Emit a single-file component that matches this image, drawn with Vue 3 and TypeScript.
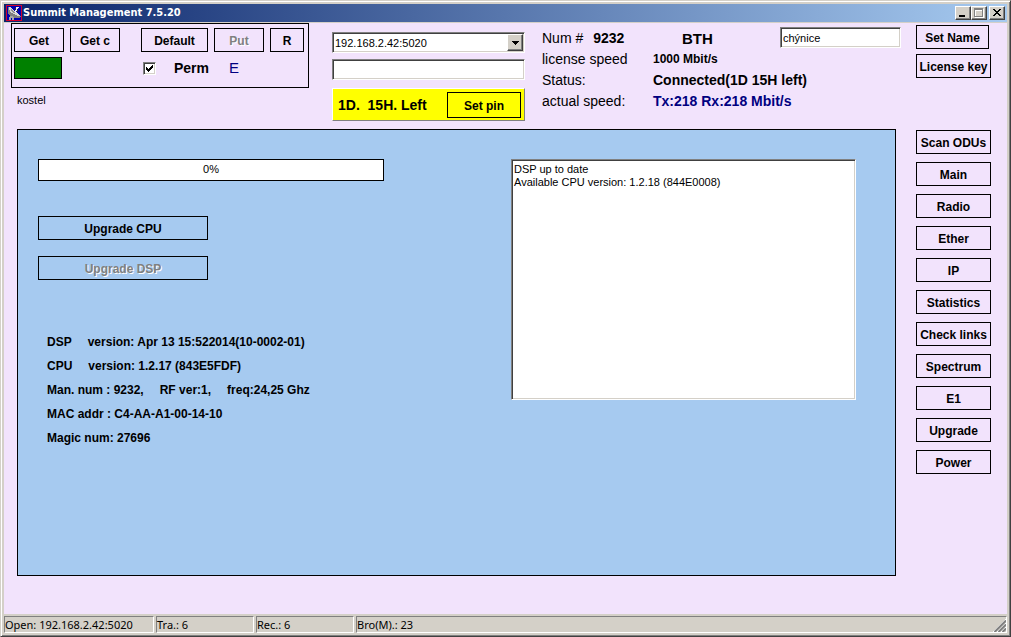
<script setup lang="ts">
import { ref } from 'vue'

const address = ref('192.168.2.42:5020')
const command = ref('')
const siteName = ref('chýnice')
const permanent = ref(true)
const progress = ref(0)
const log = ref('DSP up to date\nAvailable CPU version: 1.2.18 (844E0008)')

const pages: string[] = [
  'Scan ODUs', 'Main', 'Radio', 'Ether', 'IP', 'Statistics',
  'Check links', 'Spectrum', 'E1', 'Upgrade', 'Power',
]

const details: string[][] = [
  ['DSP', 'version: Apr 13 15:522014(10-0002-01)'],
  ['CPU', 'version: 1.2.17 (843E5FDF)'],
  ['Man. num : 9232,', 'RF ver:1,', 'freq:24,25 Ghz'],
  ['MAC addr : C4-AA-A1-00-14-10'],
  ['Magic num: 27696'],
]

const statusPanels: string[] = ['Open: 192.168.2.42:5020', 'Tra.: 6', 'Rec.: 6', 'Bro(M).: 23']
</script>

<template>
  <div class="window">
    <header class="titlebar">
      <svg class="app-icon" viewBox="0 0 16 16" shape-rendering="crispEdges" aria-hidden="true">
        <rect width="16" height="16" fill="#d00030" />
        <rect x="1" y="1" width="14" height="14" fill="#0000b0" />
        <path d="M2 2h2v1h1v1h1v1h1v1h1v1h2v1h2v1h1v1h1v1h1v1h-1v1H7v-1H5v-1H4v-1H3V9H2z" fill="#808080" />
        <path d="M3 2h2v1h1v1h1v1h1v1h2v1h1v1h1v1h1v1h1v1h-3v-1H9V9H7V8H5V7H4V5H3z" fill="#d8d8d8" />
        <path d="M5 4h1v1h1v1h1v1h1v1H7V7H6V6H5z" fill="#909090" />
        <path d="M10 2h3v1h-1v1h-1v2h-1v2H9V5h1z" fill="#f0f0f0" />
        <path d="M9 3h1v2H9zM11 5h1v2h-1z" fill="#303030" />
        <path d="M4 11h3v1h1v3H6v-2H5v2H3v-3h1z" fill="#a8a8a8" />
      </svg>
      <h1>Summit Management 7.5.20</h1>
      <div class="caption-buttons">
        <button type="button" class="caption" aria-label="Minimize">
          <svg viewBox="0 0 12 10" shape-rendering="crispEdges"><path d="M2 7h6v2H2z" fill="#000" /></svg>
        </button>
        <button type="button" class="caption" aria-label="Maximize" disabled>
          <svg viewBox="0 0 12 10" shape-rendering="crispEdges">
            <path d="M2 1h9v9H2zM3 3v6h7V3z" fill="#fff" fill-rule="evenodd" />
            <path d="M1 0h9v9H1zM2 2v6h7V2z" fill="#808080" fill-rule="evenodd" />
          </svg>
        </button>
        <button type="button" class="caption close" aria-label="Close">
          <svg viewBox="0 0 12 10" shape-rendering="crispEdges">
            <path d="M2 1h2v1h1v1h2V2h1V1h2v1H9v1H8v1H7v1h1v1h1v1h1v1H8V7H7V6H5v1H4v1H2V7h1V6h1V5h1V4H4V3H3V2H2z" fill="#000" />
          </svg>
        </button>
      </div>
    </header>

    <main class="client">
      <section class="top">
        <div class="actions">
          <div class="group">
            <div class="row">
              <button type="button" class="btn w50">Get</button>
              <button type="button" class="btn w50">Get c</button>
              <button type="button" class="btn default">Default</button>
              <button type="button" class="btn w50" disabled>Put</button>
              <button type="button" class="btn reset">R</button>
            </div>
            <div class="row second">
              <span class="lamp"></span>
              <label class="perm"><input v-model="permanent" type="checkbox" />Perm</label>
              <span class="flag">E</span>
            </div>
          </div>
          <span class="site">kostel</span>
        </div>

        <div class="connect">
          <div class="combo">
            <select v-model="address" aria-label="Address">
              <option>192.168.2.42:5020</option>
            </select>
            <span class="arrow"><svg viewBox="0 0 7 4" shape-rendering="crispEdges"><path d="M0 0h7v1H6v1H5v1H4v1H3V3H2V2H1V1H0z" /></svg></span>
          </div>
          <input v-model="command" class="field" type="text" aria-label="Command" />
          <div class="lease">
            <span>1D.&nbsp; 15H. Left</span>
            <button type="button" class="btn pin">Set pin</button>
          </div>
        </div>

        <dl class="status">
          <dt>Num # <b>9232</b></dt>
          <dd class="mode">BTH</dd>
          <dt>license speed</dt>
          <dd class="small">1000 Mbit/s</dd>
          <dt>Status:</dt>
          <dd>Connected(1D 15H left)</dd>
          <dt>actual speed:</dt>
          <dd class="rate">Tx:218 Rx:218 Mbit/s</dd>
        </dl>

        <input v-model="siteName" class="field name" type="text" aria-label="Name" />
        <div class="side-top">
          <button type="button" class="btn">Set Name</button>
          <button type="button" class="btn">License key</button>
        </div>
      </section>

      <section class="body">
        <div class="panel">
          <div class="upgrade">
            <div class="progress" role="progressbar" :aria-valuenow="progress" aria-label="Upgrade progress">{{ progress }}%</div>
            <button type="button" class="btn wide">Upgrade CPU</button>
            <button type="button" class="btn wide" disabled>Upgrade DSP</button>
            <ul class="details">
              <li v-for="(line, i) in details" :key="i">
                <span v-for="part in line" :key="part">{{ part }}</span>
              </li>
            </ul>
          </div>
          <textarea v-model="log" class="log" aria-label="Log" spellcheck="false"></textarea>
        </div>
        <nav class="pages">
          <button v-for="page in pages" :key="page" type="button" class="btn">{{ page }}</button>
        </nav>
      </section>
    </main>

    <footer class="statusbar">
      <span v-for="text in statusPanels" :key="text">{{ text }}</span>
      <svg class="grip" viewBox="0 0 13 13" aria-hidden="true">
        <path d="M0 13L13 0M4 13l9-9M8 13l5-5" stroke="#fff" />
        <path d="M1.5 13L13 1.500M5.500 13L13 5.500M9.500 13L13 9.500" stroke="#808080" stroke-width="2" />
      </svg>
    </footer>
  </div>
</template>

<style>
body {
  margin: 0;
  background: #d4d0c8;
}
</style>

<style scoped>
* {
  box-sizing: border-box;
}

.window {
  display: flex;
  flex-direction: column;
  min-height: 100vh;
  padding: 3px;
  border: 1px solid;
  border-color: #d4d0c8 #404040 #404040 #d4d0c8;
  box-shadow: inset 1px 1px #fff, inset -1px -1px #808080;
  background: #d4d0c8;
  color: #000;
  font: 12px/14px "Liberation Sans", Arial, sans-serif;
}

.titlebar {
  display: flex;
  align-items: center;
  height: 18px;
  margin-bottom: 1px;
  padding: 0 2px;
  background: linear-gradient(90deg, #0a246a, #a6caf0);
}

.app-icon {
  flex: none;
  width: 16px;
  height: 16px;
}

h1 {
  flex: 1;
  margin: 0 0 0 1px;
  color: #fff;
  font: bold 11px/18px "DejaVu Sans Condensed", Tahoma, "Noto Sans", sans-serif;
}

.caption-buttons {
  display: flex;
}

.caption {
  width: 16px;
  height: 14px;
  padding: 1px;
  border: 1px solid;
  border-color: #fff #404040 #404040 #fff;
  box-shadow: inset -1px -1px #808080;
  background: #d4d0c8;
}

.caption svg {
  display: block;
  width: 12px;
  height: 10px;
}

.close {
  margin-left: 2px;
}

.client {
  flex: 1;
  padding-right: 16px;
  background: #f2e3fc;
}

.top {
  display: flex;
  min-height: 106px;
  padding-left: 7px;
}

.btn {
  height: 24px;
  padding: 2px 0 0;
  border: 1px solid #000;
  border-radius: 0;
  background: transparent;
  color: #000;
  font: bold 12px/14px "Liberation Sans", Arial, sans-serif;
  white-space: nowrap;
}

.btn:disabled {
  color: #808080;
  text-shadow: 1px 1px #fff;
}

.actions {
  flex: none;
  width: 298px;
}

.group {
  height: 65px;
  padding: 4px 2px;
  border: 1px solid #000;
}

.row {
  display: flex;
  gap: 6px;
}

.w50 {
  width: 50px;
}

.default {
  width: 67px;
  margin-left: 15px;
}

.reset {
  width: 34px;
}

.second {
  align-items: center;
  gap: 0;
  margin-top: 5px;
}

.lamp {
  width: 48px;
  height: 22px;
  border: 1px solid #000;
  background: #008000;
}

.perm {
  display: flex;
  align-items: center;
  width: 86px;
  margin-left: 81px;
  font-size: 14px;
  font-weight: bold;
}

.perm input {
  appearance: none;
  width: 13px;
  height: 13px;
  margin: 0 18px 0 0;
  border: 1px solid;
  border-color: #808080 #fff #fff #808080;
  box-shadow: inset 1px 1px #404040, inset -1px -1px #d4d0c8;
  background: #fff;
}

.perm input:checked {
  background: #fff url("data:image/svg+xml,%3Csvg xmlns='http://www.w3.org/2000/svg' viewBox='0 0 7 7' shape-rendering='crispEdges'%3E%3Cpath d='M0 2h1v1h1v1h1V3h1V2h1V1h1V0h1v3H6v1H5v1H4v1H3v1H2V6H1V5H0z'/%3E%3C/svg%3E") center / 7px 7px no-repeat;
}

.flag {
  color: #000080;
  font-size: 15px;
}

.site {
  display: block;
  margin: 5px 6px;
  font-size: 11px;
}

.connect {
  flex: none;
  width: 193px;
  margin: 9px 0 0 23px;
}

.field,
.combo {
  display: block;
  width: 100%;
  height: 21px;
  padding: 0 2px;
  border: 1px solid;
  border-color: #808080 #fff #fff #808080;
  border-radius: 0;
  box-shadow: inset 1px 1px #404040, inset -1px -1px #d4d0c8;
  background: #fff;
  color: #000;
  font: 12px/14px "Liberation Sans", Arial, sans-serif;
  outline: none;
}

.combo {
  display: flex;
  margin-bottom: 6px;
  padding: 1px;
  font-size: 11px;
}

.combo select {
  flex: 1;
  appearance: none;
  padding: 0 1px;
  border: 0;
  background: transparent;
  color: #000;
  font: inherit;
}

.arrow {
  display: grid;
  place-items: center;
  width: 16px;
  border: 1px solid;
  border-color: #fff #404040 #404040 #fff;
  box-shadow: inset -1px -1px #808080;
  background: #d4d0c8;
  pointer-events: none;
}

.arrow svg {
  width: 7px;
  height: 4px;
}

.lease {
  display: flex;
  align-items: center;
  justify-content: space-between;
  height: 33px;
  margin-top: 8px;
  padding: 0 3px 0 5px;
  border: 1px solid;
  border-color: #fff #808080 #808080 #fff;
  background: #ff0;
  font-size: 14px;
  font-weight: bold;
}

.pin {
  width: 74px;
  height: 26px;
}

.status {
  display: grid;
  flex: 1;
  grid-template-columns: 111px 1fr;
  grid-auto-rows: 21px;
  min-width: 0;
  margin: 5px 0 0 17px;
  font-size: 14px;
  line-height: 21px;
  white-space: nowrap;
}

.status dt b {
  margin-left: 6px;
}

.status dd {
  margin: 0;
  font-weight: bold;
}

.status .mode {
  padding-left: 29px;
  font-size: 15px;
}

.status .small {
  font-size: 12px;
}

.status .rate {
  color: #000080;
}

.name {
  flex: none;
  width: 121px;
  margin-top: 4px;
  font-size: 11px;
}

.side-top {
  display: flex;
  flex: none;
  flex-direction: column;
  gap: 5px;
  width: 75px;
  margin: 2px 0 0 15px;
}

.side-top .btn:first-child {
  margin-right: 2px;
}

.body {
  display: flex;
  gap: 20px;
  padding-left: 13px;
}

.panel {
  display: flex;
  flex: 1;
  justify-content: space-between;
  min-height: 447px;
  padding: 29px 39px 20px 20px;
  border: 1px solid #000;
  background: #a6caf0;
}

.upgrade {
  display: flex;
  flex-direction: column;
  align-items: flex-start;
  width: 346px;
}

.progress {
  width: 100%;
  height: 22px;
  margin-bottom: 35px;
  border: 1px solid #000;
  background: #fff;
  font-size: 11px;
  line-height: 19px;
  text-align: center;
}

.wide {
  width: 170px;
  margin-bottom: 16px;
}

.details {
  margin: 34px 0 0;
  padding: 0 0 0 9px;
  list-style: none;
  font-weight: bold;
  line-height: 24px;
}

.details li {
  display: flex;
  gap: 16px;
  white-space: nowrap;
}

.log {
  width: 345px;
  height: 241px;
  padding: 3px 2px;
  border: 1px solid;
  border-color: #808080 #fff #fff #808080;
  border-radius: 0;
  box-shadow: inset 1px 1px #404040, inset -1px -1px #d4d0c8;
  background: #fff;
  color: #000;
  font: 11px/13px "Liberation Sans", Arial, sans-serif;
  outline: none;
  resize: none;
}

.pages {
  display: flex;
  flex-direction: column;
  gap: 8px;
  width: 75px;
  padding-top: 1px;
}

.statusbar {
  display: flex;
  gap: 2px;
  padding-top: 2px;
  font: 11px/15px "Noto Sans", Tahoma, sans-serif;
  position: relative;
}

.statusbar span {
  width: 98px;
  height: 17px;
  border: 1px solid;
  border-color: #808080 #fff #fff #808080;
  white-space: nowrap;
}

.statusbar span:first-child {
  width: 150px;
}

.statusbar span:last-of-type {
  flex: 1;
}

.grip {
  position: absolute;
  right: 1px;
  bottom: 1px;
  width: 13px;
  height: 13px;
}
</style>
